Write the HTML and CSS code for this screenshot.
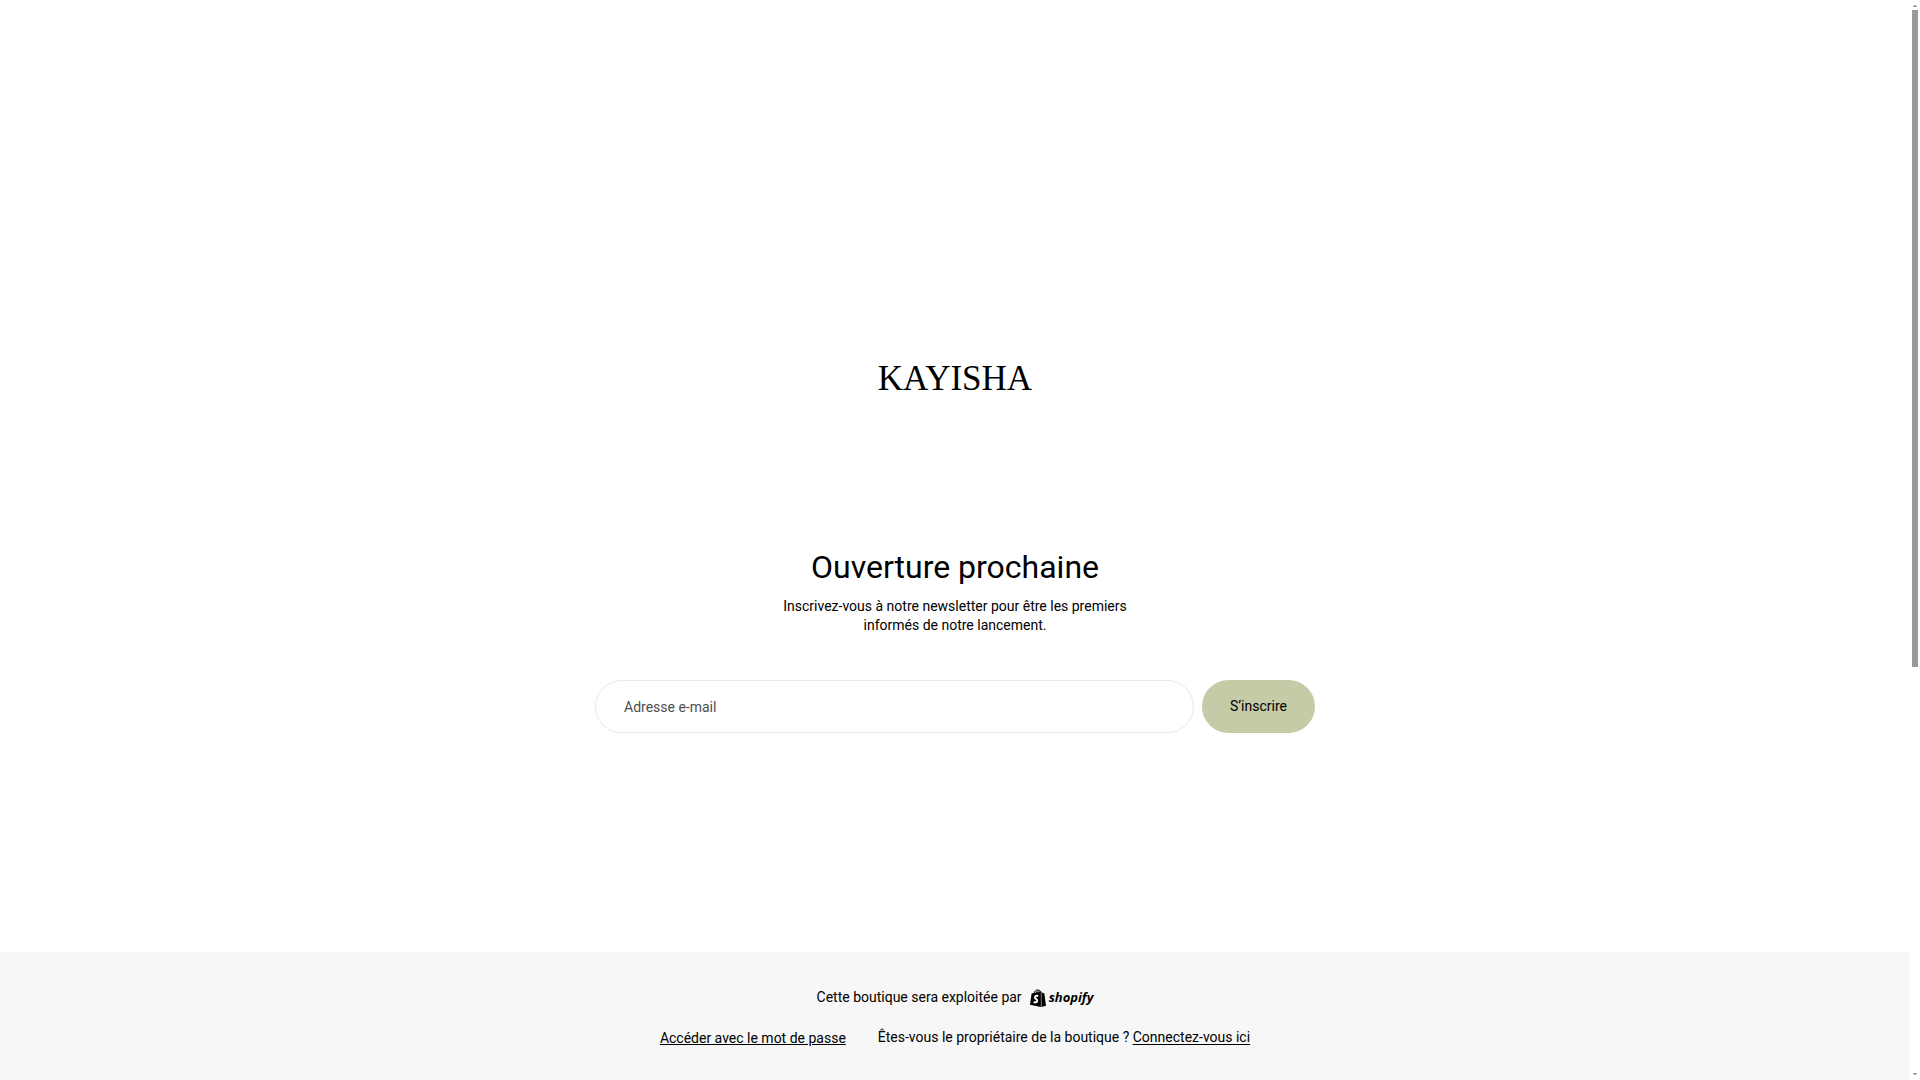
FILE: index.html
```html
<!DOCTYPE html>
<html lang="fr">
<head>
    <meta charset="UTF-8">
    <meta name="viewport" content="width=device-width, initial-scale=1.0">
    <title>KAYISHA</title>
    <link rel="stylesheet" href="styles.css">
</head>
<body>

    <div class="page">
        <main class="main">
            <header class="brand">KAYISHA</header>

            <!-- Newsletter -->
            <section class="newsletter">
                <h1>Ouverture prochaine</h1>
                <p>Inscrivez-vous à notre newsletter pour être les premiers informés de notre lancement.</p>
                <form class="signup-form">
                    <input type="email" name="email" placeholder="Adresse e-mail" aria-label="Adresse e-mail" required>
                    <button type="submit" class="btn">S’inscrire</button>
                </form>
            </section>
        </main>

        <footer class="footer">
            <div class="powered-by">
                <span>Cette boutique sera exploitée par</span>
                <a href="https://www.shopify.com" class="shopify">
                    <svg viewBox="0 0 16 18" width="16" height="18" aria-hidden="true">
                        <path d="M1.600 4.600 L10.900 2.400 L10.900 17.900 L0 15.800 Z"/>
                        <path d="M11.400 2.600 L12.700 4 L14.300 4.200 L16 16.800 L11.400 17.900 Z"/>
                        <path class="handle" d="M3.900 5 C4.400 2.500 5.900 0.800 7.300 0.800 C8.700 0.800 9.100 2 9.200 3.600 M6.400 4.200 C6.800 2 8 1.300 9 1.300 C9.900 1.300 10.500 2 10.700 3.200"/>
                        <path class="letter" d="M8.200 7 C6.600 6.300 5 7 5 8.400 C5 10 7.200 10 7.200 11.800 C7.200 13.500 5.200 13.900 3.700 12.700"/>
                    </svg>
                    <span>shopify</span>
                </a>
            </div>
            <div class="footer-links">
                <a href="#password" class="password-link">Accéder avec le mot de passe</a>
                <p>Êtes-vous le propriétaire de la boutique ? <a href="/admin">Connectez-vous ici</a></p>
            </div>
        </footer>
    </div>

    <!-- Scrollbar -->
    <div class="scrollbar" aria-hidden="true">
        <svg class="arrow" viewBox="0 0 4 2" width="4" height="2"><path d="M1 0h2v1h1v1H0V1h1z"/></svg>
        <div class="track"><div class="thumb"></div></div>
        <svg class="arrow" viewBox="0 0 4 2" width="4" height="2"><path d="M0 0h4v1H3v1H1V1H0z"/></svg>
    </div>

</body>
</html>
```
FILE: styles.css
```css
:root {
    --text-color: #000000;
    --placeholder-color: #4d4d4d;
    --border-color: #e8e8e8;
    --button-color: #c5cba7;
    --footer-color: #f7f7f7;
    --scroll-color: #999999;
}

* {
    margin: 0;
    padding: 0;
    box-sizing: border-box;
}

body {
    display: flex;
    min-height: 100vh;
    font-family: Roboto, sans-serif;
    font-size: 14px;
    line-height: 19px;
    color: var(--text-color);
    background-color: #ffffff;
}

.page {
    flex: 1;
    display: flex;
    flex-direction: column;
}

.main {
    flex: 1;
    display: flex;
    flex-direction: column;
    justify-content: center;
    align-items: center;
    gap: 146px;
    padding: 138px 20px 0;
}

.brand {
    font-family: "Liberation Serif", serif;
    font-size: 35px;
    line-height: 44px;
}

/* Newsletter */
.newsletter {
    display: flex;
    flex-direction: column;
    align-items: center;
    width: 100%;
    max-width: 720px;
    text-align: center;
}

.newsletter h1 {
    font-size: 32px;
    font-weight: 400;
    line-height: 40px;
    margin-bottom: 10px;
}

.newsletter p {
    max-width: 360px;
    margin-bottom: 45px;
}

.signup-form {
    display: flex;
    gap: 8px;
    width: 100%;
}

.signup-form input {
    flex: 1;
    min-width: 0;
    height: 53px;
    padding: 0 28px;
    border: 1px solid var(--border-color);
    border-radius: 27px;
    font: inherit;
    background-color: #ffffff;
}

.signup-form input::placeholder {
    color: var(--placeholder-color);
}

.btn {
    height: 53px;
    padding: 0 28px;
    border: none;
    border-radius: 27px;
    font: inherit;
    color: var(--text-color);
    background-color: var(--button-color);
    cursor: pointer;
}

/* Footer */
.footer {
    display: flex;
    flex-direction: column;
    align-items: center;
    gap: 21px;
    padding: 36px 20px 31px;
    background-color: var(--footer-color);
}

.footer a {
    color: var(--text-color);
    text-underline-offset: 2px;
}

.powered-by {
    display: flex;
    align-items: center;
    gap: 8px;
}

.footer .shopify {
    display: flex;
    align-items: center;
    gap: 3px;
    font-family: "Open Sans", sans-serif;
    font-size: 13px;
    font-style: italic;
    font-weight: 700;
    text-decoration: none;
}

.shopify .handle {
    fill: none;
    stroke: #000000;
}

.shopify .letter {
    fill: none;
    stroke: #ffffff;
    stroke-width: 2;
}

.footer-links {
    display: flex;
    flex-wrap: wrap;
    justify-content: center;
    gap: 32px;
}

.footer .password-link {
    line-height: 21px;
    text-underline-offset: 1px;
}

/* Scrollbar */
.scrollbar {
    display: flex;
    flex-direction: column;
    align-items: center;
    gap: 3px;
    width: 10px;
    padding: 5px 0;
}

.arrow {
    fill: var(--scroll-color);
}

.track {
    flex: 1;
    width: 6px;
}

.thumb {
    height: 62%;
    background-color: var(--scroll-color);
}
```
